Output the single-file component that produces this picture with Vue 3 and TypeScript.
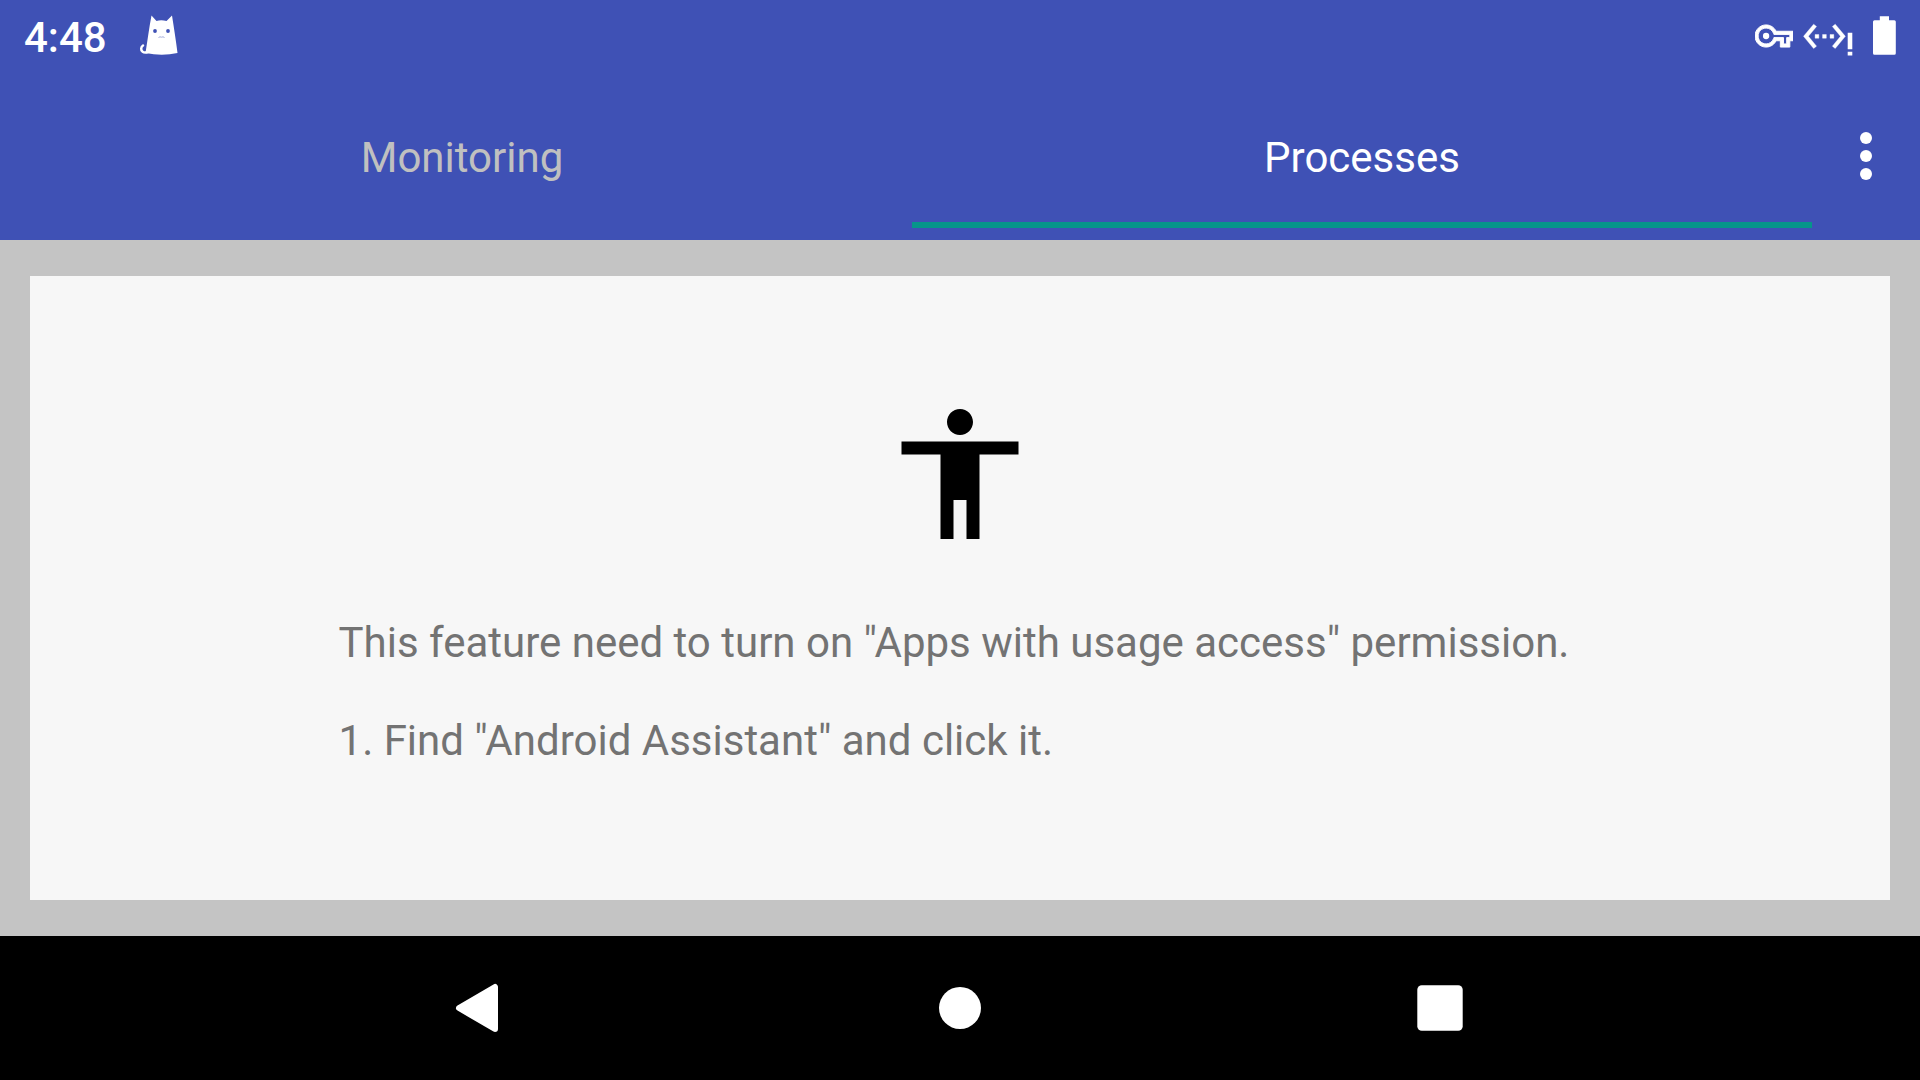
<script setup lang="ts">
import { ref } from 'vue'

interface Tab {
  id: string
  label: string
}

const tabs: Tab[] = [
  { id: 'monitoring', label: 'Monitoring' },
  { id: 'processes', label: 'Processes' },
]
const activeTab = ref('processes')
</script>

<template>
  <div class="screen">
    <header class="status-bar">
      <time class="clock">4:48</time>
      <svg class="cat" viewBox="0 0 42 48" width="42" height="48" aria-hidden="true">
        <path
          fill="#fff"
          d="M13.500 3.500 18.500 9Q23 7.600 28.500 9L34 3.500C36 16 38 29 39.500 41Q24 44.500 7.500 41C9.500 29 11 16 13.500 3.500Z"
        />
        <path d="M10 40C5 41.500 3 39 3.200 36.500Q3.400 34.500 5 33.500" fill="none" stroke="#fff" stroke-width="2.500" stroke-linecap="round" />
        <circle cx="17" cy="19" r="1.900" fill="#3f51b5" />
        <circle cx="30" cy="19" r="1.900" fill="#3f51b5" />
        <path d="M20.500 25.500Q22 24.300 23.500 25.200Q25 24.300 26.500 25.500" fill="none" stroke="#a5aedb" stroke-width="1" />
      </svg>
      <div class="system-icons">
        <svg class="key" viewBox="0 0 24 24" width="38" height="38" aria-hidden="true">
          <path
            fill="#fff"
            stroke="#fff"
            stroke-width=".6"
            d="M22 19h-6v-4h-2.680c-1.140 2.420-3.600 4-6.320 4-3.860 0-7-3.140-7-7s3.140-7 7-7c2.720 0 5.170 1.580 6.320 4H24v6h-2v4zm-4-2h2v-4h2v-2H11.940l-.23-.67C11.010 8.340 9.110 7 7 7c-2.760 0-5 2.240-5 5s2.240 5 5 5c2.110 0 4.010-1.340 4.710-3.330l.23-.67H18v4z"
          />
          <circle cx="7" cy="12" r="2" fill="#fff" />
        </svg>
        <svg class="ethernet" viewBox="0 0 52 48" width="52" height="48" aria-hidden="true">
          <path
            transform="translate(0 1.900) scale(1.870)"
            fill="#fff"
            stroke="#fff"
            stroke-width=".2"
            d="M7.770 6.760L6.230 5.480.82 12l5.410 6.520 1.540-1.280L3.420 12l4.350-5.240zM7 13h2v-2H7v2zm10-2h-2v2h2v-2zm-6 2h2v-2h-2v2zm6.770-7.520l-1.540 1.280L20.580 12l-4.350 5.240 1.540 1.280L23.180 12l-5.410-6.520z"
          />
          <path fill="#fff" d="M45.700 20.700h4.600v16.600h-4.600zM45.700 39.700h4.600v3.700h-4.600z" />
        </svg>
        <svg class="battery" viewBox="0 0 24 40" width="24" height="40" aria-hidden="true">
          <path fill="#fff" d="M7.800 0.300h9.200v4h5.300a1.500 1.500 0 0 1 1.500 1.500v31.500a1.500 1.500 0 0 1-1.500 1.500h-19.800a1.500 1.500 0 0 1-1.500-1.500v-31.500a1.500 1.500 0 0 1 1.500-1.500h5.300z" />
        </svg>
      </div>
    </header>

    <div class="app-bar">
      <div class="tabs" role="tablist">
        <button
          v-for="tab in tabs"
          :key="tab.id"
          type="button"
          role="tab"
          class="tab"
          :class="{ active: tab.id === activeTab }"
          :aria-selected="tab.id === activeTab"
          @click="activeTab = tab.id"
        >
          {{ tab.label }}
        </button>
      </div>
      <button type="button" class="overflow" aria-label="More options">
        <svg viewBox="0 0 12 48" width="12" height="48" aria-hidden="true">
          <circle cx="6" cy="6" r="6" fill="#fff" />
          <circle cx="6" cy="24" r="6" fill="#fff" />
          <circle cx="6" cy="42" r="6" fill="#fff" />
        </svg>
      </button>
    </div>

    <main class="content">
      <section class="card">
        <svg class="person" viewBox="0 0 24 24" width="156" height="156" aria-hidden="true">
          <path d="M12 2c1.100 0 2 .9 2 2s-.9 2-2 2-2-.9-2-2 .9-2 2-2zm9 7h-6v13h-2v-6h-2v6H9V9H3V7h18v2z" />
        </svg>
        <div class="message">
          <p>This feature need to turn on "Apps with usage access" permission.</p>
          <p>1. Find "Android Assistant" and click it.</p>
        </div>
      </section>
    </main>

    <nav class="nav-bar">
      <button type="button" aria-label="Back">
        <svg viewBox="0 0 72 72" width="72" height="72" aria-hidden="true">
          <path d="M51 15v42L15 36z" fill="#fff" stroke="#fff" stroke-width="6" stroke-linejoin="round" />
        </svg>
      </button>
      <button type="button" aria-label="Home">
        <svg viewBox="0 0 72 72" width="72" height="72" aria-hidden="true">
          <circle cx="36" cy="36" r="21" fill="#fff" />
        </svg>
      </button>
      <button type="button" aria-label="Recent apps">
        <svg viewBox="0 0 72 72" width="72" height="72" aria-hidden="true">
          <rect x="13.300" y="13.300" width="45.400" height="45.400" rx="4.500" fill="#fff" />
        </svg>
      </button>
    </nav>
  </div>
</template>

<style>
body {
  margin: 0;
}
</style>

<style scoped>
.screen {
  display: flex;
  flex-direction: column;
  min-height: 100vh;
  background: #c4c4c4;
  font-family: Roboto, "Noto Sans", sans-serif;
  font-size: 42px;
  line-height: 50px;
}

button {
  padding: 0;
  border: 0;
  background: none;
  color: inherit;
  font: inherit;
  cursor: pointer;
}

svg {
  display: block;
  flex: none;
}

.status-bar {
  display: flex;
  align-items: center;
  box-sizing: border-box;
  height: 72px;
  padding: 0 24px;
  background: #3f51b5;
  color: #fff;
}

.clock {
  padding-top: 3px;
  font-weight: 500;
}

.cat {
  margin-left: 31px;
}

.system-icons {
  display: flex;
  align-items: center;
  margin-left: auto;
}

.ethernet {
  margin-left: 9px;
}

.battery {
  margin-left: 18px;
}

.app-bar {
  display: flex;
  height: 168px;
  padding-left: 12px;
  background: #3f51b5;
}

.tabs {
  display: flex;
  flex: 1;
  padding: 12px 0;
}

.tab {
  flex: 1;
  padding-top: 10px;
  border-bottom: 6px solid transparent;
  color: #c0c0c0;
}

.tab.active {
  border-bottom-color: #06958a;
  color: #fff;
}

.overflow {
  display: flex;
  align-items: center;
  justify-content: center;
  width: 108px;
}

.content {
  display: flex;
  flex: 1;
  padding: 36px 30px;
}

.card {
  display: flex;
  flex: 1;
  flex-direction: column;
  align-items: center;
  padding: 120px 24px 60px;
  background: #f7f7f7;
}

.message {
  display: flex;
  flex-direction: column;
  gap: 48px;
  margin-top: 66px;
  padding-right: 12px;
  color: #737373;
}

.message p {
  margin: 0;
}

.nav-bar {
  display: flex;
  height: 144px;
  padding: 0 12.5%;
  background: #000;
}

.nav-bar button {
  display: flex;
  flex: 1;
  align-items: center;
  justify-content: center;
}
</style>
